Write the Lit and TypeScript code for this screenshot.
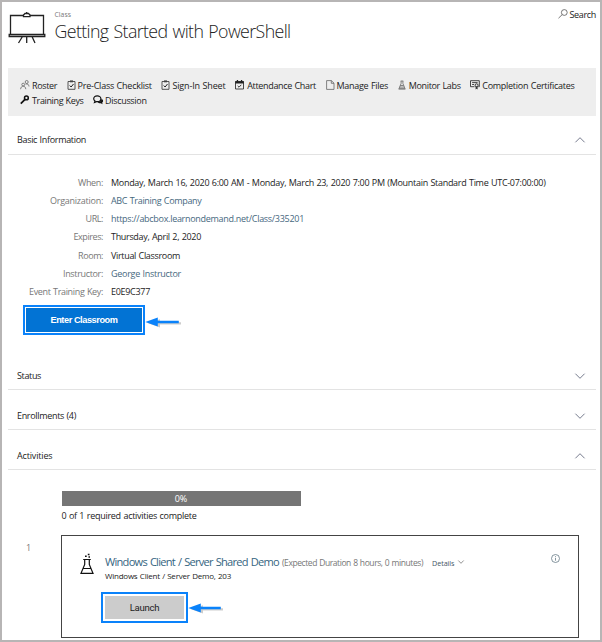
import { LitElement, html, svg, css, TemplateResult } from "lit";
import { customElement, property } from "lit/decorators.js";

/** A single line of text whose tracking is adjusted to fill a given measure. */
@customElement("fit-text")
class FitText extends LitElement {
  @property({ type: Number }) measure = 0;
  static styles = css`
    :host { display: inline-block; white-space: pre; }
    .line { display: inline-block; }
  `;
  render() {
    return html`<span class="line"><slot></slot></span>`;
  }
  firstUpdated() {
    const line = this.renderRoot.querySelector(".line") as HTMLElement;
    const count = (this.textContent || "").length;
    const natural = line.getBoundingClientRect().width;
    if (count && this.measure) {
      this.style.letterSpacing = `${(this.measure - natural) / count}px`;
      this.style.width = `${this.measure}px`;
    }
  }
}

const fit = (text: string, w: number) => html`<fit-text measure=${w}>${text}</fit-text>`;

const clipboard = svg`<path d="M1 1.5h7v7.8h-7z" fill="none" stroke="#444" stroke-width=".9"/><path d="M3 .4h3v1.9h-3z" fill="#444"/><path d="M2.7 5.5l1.4 1.5 2.4-3" fill="none" stroke="#222"/>`;
const icons: Record<string, TemplateResult> = {
  roster: svg`<g fill="none" stroke="#666" stroke-width=".8"><circle cx="6.7" cy="2" r="1.5"/><circle cx="3.2" cy="4.6" r="1.4"/><path d="M.6 9.2c.2-2 1.200-3 2.600-3s2.400 1 2.600 3M5.600 4.200c1.900-.8 3.200.1 3.400 2.300"/></g>`,
  clipboard,
  calendar: svg`<path d="M.5 1.500h8v7.500h-8z" fill="none" stroke="#333" stroke-width=".9"/><path d="M.3 1.200h8.400v2.300h-8.400zM1.800 0h1.300v2h-1.300zM5.900 0h1.300v2h-1.300z" fill="#222"/><path d="M2.700 5.900l1.300 1.300 2.300-2.400" fill="none" stroke="#222" stroke-width=".9"/>`,
  file: svg`<path d="M.6.600h4.800l2.600 2.600v6.200h-7.400zM5.300.600v2.700h2.700" fill="none" stroke="#666" stroke-width=".8"/>`,
  labs: svg`<path d="M2.700 1h2.600M3.100 1v2.400L1 8.700h6L4.900 3.400V1M2.300 5.500h3.200M1.700 7.100h4.500" fill="none" stroke="#666" stroke-width=".8"/><path d="M.5 9h7" stroke="#777"/>`,
  certificate: svg`<path d="M4.500 6.700h-4v-6h8.800v6h-1M2.100 2.600h5.500M2.100 4.500h2" fill="none" stroke="#333" stroke-width=".9"/><circle cx="6.600" cy="5.300" r="1.500" fill="#eee" stroke="#222" stroke-width=".9"/><path d="M5.600 6.500v3l1-.8 1 .8v-3" fill="#333"/>`,
  key: svg`<circle cx="6.400" cy="2.900" r="1.900" fill="none" stroke="#111" stroke-width="1.500"/><path d="M5 4.300L.8 8.600" fill="none" stroke="#111" stroke-width="1.700"/>`,
  chat: svg`<path d="M4.200.8C2.100.8.700 2 .700 3.700c0 1 .5 1.800 1.300 2.300L1.500 7.500l2-.9h1c2 0 3.400-1.200 3.400-2.900S6.300.8 4.200.8z" fill="none" stroke="#111" stroke-width="1.200"/><path d="M8.500 3.700c1 .5 1.600 1.300 1.600 2.200 0 .7-.4 1.400-1 1.800l.6 1.500-2-.9c-1.400.1-2.600-.3-3.200-1.100C6.900 7.100 8.500 5.800 8.500 3.700z" fill="#111"/>`,
};

const tools: [string, string, number, number][] = [
  ["roster", "Roster", 12, 25],
  ["clipboard", "Pre-Class Checklist", 11, 74.2],
  ["clipboard", "Sign-In Sheet", 11, 53.2],
  ["calendar", "Attendance Chart", 12, 68.8],
  ["file", "Manage Files", 11, 51.5],
  ["labs", "Monitor Labs", 11, 52],
  ["certificate", "Completion Certificates", 12, 92.3],
];
const tools2: [string, string, number, number][] = [
  ["key", "Training Keys", 12, 51.5],
  ["chat", "Discussion", 12, 41.5],
];

const facts: { label: string; lw: number; value: string; vw: number; link?: boolean }[] = [
  { label: "When:", lw: 25, value: "Monday, March 16, 2020 6:00 AM - Monday, March 23, 2020 7:00 PM (Mountain Standard Time UTC-07:00:00)", vw: 434.5 },
  { label: "Organization:", lw: 53, value: "ABC Training Company", vw: 90.5, link: true },
  { label: "URL:", lw: 17.5, value: "https://abcbox.learnondemand.net/Class/335201", vw: 193, link: true },
  { label: "Expires:", lw: 29.5, value: "Thursday, April 2, 2020", vw: 90 },
  { label: "Room:", lw: 25, value: "Virtual Classroom", vw: 69 },
  { label: "Instructor:", lw: 40, value: "George Instructor", vw: 70, link: true },
  { label: "Event Training Key:", lw: 74, value: "E0E9C377", vw: 39 },
];

@customElement("app-root")
class AppRoot extends LitElement {
  static styles = css`
    :host {
      display: block; box-sizing: border-box; width: 602px; height: 642px; overflow: hidden;
      border: 2px solid #b7b5b5; background: #fff; color: #222;
      font: 9px/14px "Open Sans", "Noto Sans", sans-serif; word-spacing: .5px;
    }
    svg { display: block; flex: none; overflow: visible; }
    .page { padding: 0 4px 0 6px; }
    header { display: flex; height: 66px; }
    .easel { margin: 9px 0 0 -.5px; }
    .titles { margin: 7px 0 0 10px; flex: 1; }
    .kind { font-size: 6.8px; line-height: 12px; height: 12px; color: #777; }
    h1 { margin: -3px 0 0; font-size: 17.8px; line-height: 26px; font-weight: 300; color: #222; word-spacing: 1px; }
    .search { display: flex; gap: 2px; margin: 6px 0 0; height: 14px; }
    .search svg { margin-top: 1px; }
    .toolbar { background: #eee; height: 36.5px; padding: 11px 0 0 12px; }
    .tools { display: flex; gap: 9.6px; height: 14.5px; line-height: 14px; }
    .tool { display: flex; }
    .slot { flex: none; padding-top: 1px; height: 13px; }
    .section { display: flex; justify-content: space-between; align-items: center; box-sizing: border-box; height: 40px; padding: 12px 11px 0 9px; border-bottom: 1px solid #e3e3e3; color: #222; }
    .section.first { height: 39.5px; padding-top: 11px; }
    .facts { display: grid; grid-template-columns: 95px auto; column-gap: 8px; grid-auto-rows: 18.15px; line-height: 18px; padding-top: 19px; }
    .label { text-align: right; color: #777; }
    .value { color: #1c1c1c; }
    .value.link { color: #46687e; }
    .action { display: flex; align-items: center; }
    .frame { box-sizing: border-box; border: 2px solid #0a82fa; display: flex; }
    .btn { flex: 1; display: flex; align-items: center; justify-content: center; border: 0; padding: 0; font: 9.2px "Liberation Sans", Arial, sans-serif; }
    .enter { width: 122px; height: 30px; padding: 1px; margin-left: 15px; }
    .enter .btn { background: #0273d4; color: #fff; font-weight: 600; }
    .first-action { height: 30px; margin-top: 4px; margin-bottom: 15.5px; }
    .first-action .arrow { margin-top: 5px; }
    .launch { width: 87px; height: 31px; padding: 2px; }
    .launch .btn { background: #ccc; color: #222; font: 9.6px Roboto, sans-serif; }
    .launch-action { margin: 9px 0 0 -4px; }
    .progress { margin: 21px 0 0 53.5px; width: 239px; height: 14.5px; background: #757575; color: #fff; text-align: center; line-height: 15px; }
    .done { margin: 3px 0 0 53.5px; }
    .activity { display: flex; margin-top: 12.5px; }
    .num { width: 35px; padding: 6px 0 0 18px; box-sizing: border-box; color: #777; }
    .card { box-sizing: border-box; width: 518px; height: 103px; margin-left: 18px; border: 1px solid #444; display: flex; padding: 0 0 0 18px; }
    .card svg.flask { margin-top: 17px; }
    .body { margin-left: 11px; flex: 1; padding-top: 17px; }
    .heading { display: flex; align-items: baseline; height: 17px; line-height: 17px; }
    .name { font-size: 11.1px; color: #35657f; word-spacing: .8px; }
    .duration { margin-left: 3px; font-size: 8.5px; color: #777; }
    .details { margin-left: 9px; font-size: 7.2px; color: #456; }
    .heading svg { margin-left: 3px; align-self: center; }
    .sub { font-size: 8px; line-height: 14px; margin-top: -1px; }
    .info { margin: 18px 18px 0 0; }
  `;

  private chevron(up: boolean) {
    return html`<svg width="10" height="6" viewBox="0 0 10 6"><path d=${up ? "M.4 5.3L5 .7l4.6 4.6" : "M.4 .7L5 5.3 9.6 .7"} fill="none" stroke="#666c80" stroke-width=".9"/></svg>`;
  }

  private section(title: string, w: number, open: boolean, first = false) {
    return html`<div class="section ${first ? "first" : ""}">${fit(title, w)}${this.chevron(open)}</div>`;
  }

  private arrow(w: number) {
    return html`<svg class="arrow" width=${w} height="14" viewBox="0 0 ${w} 14">
      <path d="M3 8.2l12-4v3h${w - 15}v2.200H15v3z" fill="#000" opacity=".2"/>
      <path d="M.3 7l12.500-4.500v3.300h${w - 15}v2.400H12.800v3.300z" fill="#0a82fa"/></svg>`;
  }

  private toolItem([icon, text, slot, w]: [string, string, number, number]) {
    return html`<span class="tool"><span class="slot"><svg width=${slot} height="10" viewBox="0 0 ${slot} 10">${icons[icon]}</svg></span>${fit(text, w)}</span>`;
  }

  render() {
    return html`<div class="page">
      <header>
        <svg class="easel" width="37" height="34" viewBox="0 0 37 34" fill="none" stroke="#222" stroke-width="1.3">
          <path d="M2.5 23V4.5h33V23M1.2 23.5h35.6v2H1.2zM14.5 25.5l-4 6.500M18.700 25.500V32M24 25.500l3 6.500M18.700 1v2"/>
          <path d="M15.500 5.600h6.500V4l-1.500-1.500h-3.500L15.500 4z" fill="#fff"/>
        </svg>
        <div class="titles">
          <div class="kind">${fit("Class", 16.5)}</div>
          <h1>${fit("Getting Started with PowerShell", 236)}</h1>
        </div>
        <div class="search">
          <svg width="10" height="10" viewBox="0 0 10 10" fill="none" stroke="#555" stroke-width=".8"><circle cx="6.3" cy="3.5" r="2.9"/><path d="M4.200 5.600L.5 9.200"/></svg>
          ${fit("Search", 26.5)}
        </div>
      </header>
      <div class="toolbar">
        <div class="tools">${tools.map((t) => this.toolItem(t))}</div>
        <div class="tools">${tools2.map((t) => this.toolItem(t))}</div>
      </div>
      ${this.section("Basic Information", 69, true, true)}
      <div class="facts">
        ${facts.map((f) => html`<div class="label">${fit(f.label, f.lw)}</div><div class="value ${f.link ? "link" : ""}">${fit(f.value, f.vw)}</div>`)}
      </div>
      <div class="action first-action">
        <div class="frame enter"><button class="btn">${fit("Enter Classroom", 67)}</button></div>${this.arrow(36)}
      </div>
      ${this.section("Status", 24, false)}
      ${this.section("Enrollments (4)", 59, false)}
      ${this.section("Activities", 35.5, true)}
      <div class="progress">0%</div>
      <div class="done">${fit("0 of 1 required activities complete", 135)}</div>
      <div class="activity">
        <div class="num">1</div>
        <div class="card">
          <svg class="flask" width="14" height="22" viewBox="0 0 14 22" fill="none" stroke="#111" stroke-width="1.2">
            <path d="M3.200 6.500h7.600M4.700 6.500v5L1 20.300h12L9.300 11.500v-5M3 15.500h8"/><path d="M5 3.300h1.700M7.800 1.500h1.700M8.500 4h1.500" stroke-width="1.500"/>
          </svg>
          <div class="body">
            <div class="heading">
              <span class="name">${fit("Windows Client / Server Shared Demo", 174)}</span>
              <span class="duration">${fit("(Expected Duration 8 hours, 0 minutes)", 141)}</span>
              <span class="details">${fit("Details", 22.5)}</span>
              <svg width="6" height="4" viewBox="0 0 6 4"><path d="M.3 .5L3 3.300 5.700 .5" fill="none" stroke="#777" stroke-width=".8"/></svg>
            </div>
            <div class="sub">${fit("Windows Client / Server Demo, 203", 126)}</div>
            <div class="action launch-action">
              <div class="frame launch"><button class="btn">${fit("Launch", 29.5)}</button></div>${this.arrow(35)}
            </div>
          </div>
          <svg class="info" width="9" height="9" viewBox="0 0 9 9" fill="none" stroke="#667a85" stroke-width=".8"><circle cx="4.500" cy="4.500" r="4"/><path d="M4.500 4v2.700M4.500 2.200v1"/></svg>
        </div>
      </div>
    </div>`;
  }
}
